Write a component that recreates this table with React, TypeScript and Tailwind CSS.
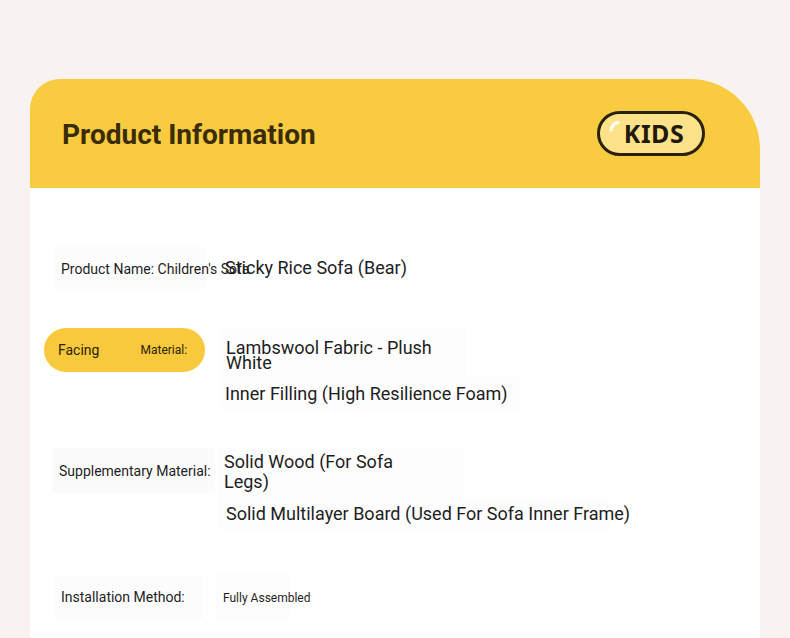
import React from "react";

export default function App() {
  return (
    <div
      className="w-[790px] h-[638px] overflow-hidden bg-[#f8f3f0] pt-[79px] pl-[30px]"
      style={{ fontFamily: "Roboto, 'Liberation Sans', sans-serif" }}
    >
      <div className="w-[730px] h-[600px] bg-white rounded-tl-[30px] rounded-tr-[70px] overflow-hidden">
        {/* header */}
        <div className="h-[109px] bg-[#f9cb40] flex items-center justify-between pl-[32px] pr-[55px]">
          <h1 className="text-[28px] font-bold text-[#3a2c05] leading-none mt-[2px]">Product Information</h1>
          <div className="relative w-[108px] h-[45px] rounded-full border-[3px] border-[#2a2109] bg-[#fde28a] flex items-center justify-center">
            <span
              className="text-[25px] font-bold text-[#1f1a0a] leading-none tracking-[0.5px] pl-[6px]"
              style={{ fontFamily: "'Noto Sans', 'Open Sans', sans-serif" }}
            >
              KIDS
            </span>
            <svg className="absolute left-[9px] top-[6px]" width="12" height="12" viewBox="0 0 12 12">
              <path d="M2 10 Q3 4 9 2.5" stroke="#ffffff" strokeWidth="3" fill="none" strokeLinecap="round" />
            </svg>
          </div>
        </div>

        {/* body */}
        <div className="flex flex-col text-[#1e1e1e]">
          {/* row 1 */}
          <div className="flex items-center mt-[59px] h-[42px]">
            <div className="ml-[25px] w-[150px] h-[42px] bg-[#fcfcfc] flex items-center pl-[6px] relative z-10">
              <span className="text-[14px] whitespace-nowrap leading-none mt-[2px]">Product Name: Children's Sofa</span>
            </div>
            <div className="ml-[15px] w-[215px] h-[42px] flex items-center pl-[5px] relative z-20">
              <span className="text-[18px] whitespace-nowrap leading-none">Sticky Rice Sofa (Bear)</span>
            </div>
          </div>

          {/* row 2 */}
          <div className="flex items-start mt-[39px]">
            <div className="ml-[14px] w-[161px] h-[44px] rounded-full bg-[#f8c93c] flex items-center pl-[14px] text-[#2a2208]">
              <span className="text-[14px] leading-none">Facing</span>
              <span className="text-[12px] leading-none ml-[41px]">Material:</span>
            </div>
            <div className="ml-[16px] flex flex-col">
              <div className="w-[245px] bg-[#fdfdfd] pl-[5px] pt-[12px] pb-[6px]">
                <p className="text-[18px] leading-[15px] w-[220px]">Lambswool Fabric - Plush White</p>
              </div>
              <div className="w-[300px] bg-[#fdfdfd] pl-[4px] h-[36px] flex items-center">
                <span className="text-[18px] leading-none whitespace-nowrap">Inner Filling (High Resilience Foam)</span>
              </div>
            </div>
          </div>

          {/* row 3 */}
          <div className="flex items-start mt-[36px]">
            <div className="ml-[22px] w-[163px] h-[45px] bg-[#fbfbfb] flex items-center pl-[7px]">
              <span className="text-[14px] whitespace-nowrap leading-none">Supplementary Material:</span>
            </div>
            <div className="ml-[3px] flex flex-col">
              <div className="w-[247px] bg-[#fdfdfd] pl-[6px] pt-[4px] pb-[6px]">
                <p className="text-[18px] leading-[20px] w-[180px]">Solid Wood (For Sofa Legs)</p>
              </div>
              <div className="w-[392px] bg-[#fdfdfd] pl-[8px] h-[32px] flex items-center">
                <span className="text-[18px] leading-none whitespace-nowrap">Solid Multilayer Board (Used For Sofa Inner Frame)</span>
              </div>
            </div>
          </div>

          {/* row 4 */}
          <div className="flex items-center mt-[43px] h-[48px]">
            <div className="ml-[25px] w-[148px] h-[43px] bg-[#fcfcfc] flex items-center pl-[6px]">
              <span className="text-[14px] whitespace-nowrap leading-none">Installation Method:</span>
            </div>
            <div className="ml-[12px] w-[75px] h-[50px] bg-[#fdfdfd] flex items-center pl-[8px]">
              <span className="text-[12px] whitespace-nowrap leading-none mt-[1px]">Fully Assembled</span>
            </div>
          </div>
        </div>
      </div>
    </div>
  );
}
